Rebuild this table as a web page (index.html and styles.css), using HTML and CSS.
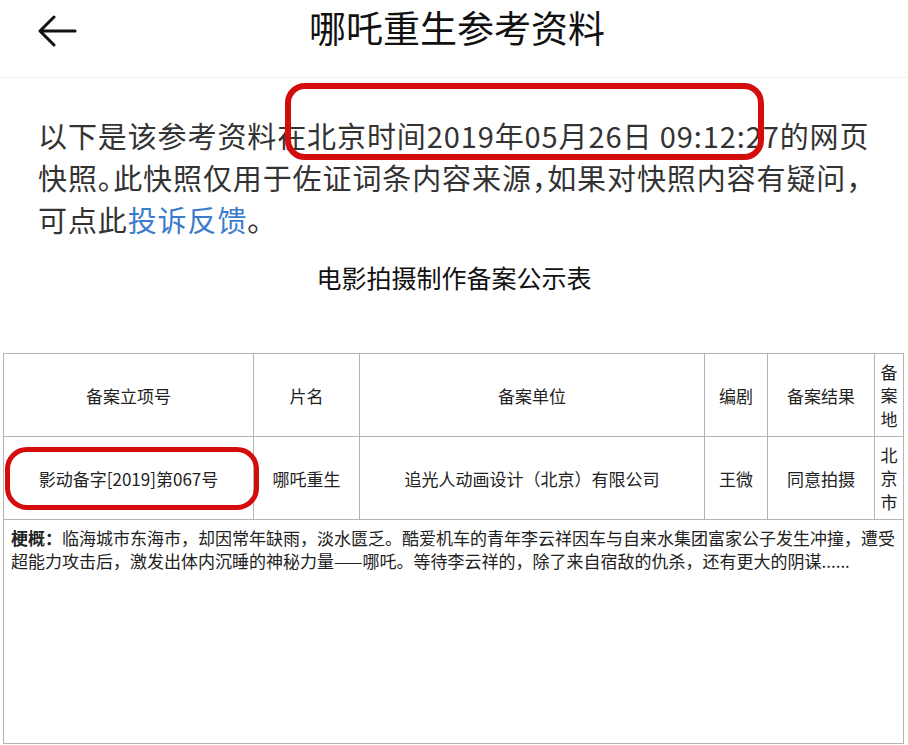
FILE: index.html
```html
<html>
	<head>
		<title>哪吒重生参考资料</title>
		<link rel="stylesheet" href="styles.css">
	</head>
	<body>

		<div class="Header">
			<div class="Back">
				<svg width="40" height="32" viewBox="0 0 40 32">
					<path d="M17 2 L3 16 L17 30 M3 16 H38" fill="none" stroke="#111" stroke-width="3" stroke-linecap="round" stroke-linejoin="round"/>
				</svg>
			</div>
			<div class="Title">哪吒重生参考资料</div>
			<div></div>
		</div>

		<div class="Notice">
			以下是该参考资料在北京时间2019年05月26日 09:12:27的网页<br/>
			快照。此快照仅用于佐证词条内容来源，如果对快照内容有疑问，<br/>
			可点此<a href="#" class="Link">投诉反馈</a>。
		</div>

		<div class="Caption">电影拍摄制作备案公示表</div>

		<table class="Record">
			<colgroup>
				<col style="width: 250px"/>
				<col style="width: 106px"/>
				<col style="width: 345px"/>
				<col style="width: 63px"/>
				<col style="width: 107px"/>
				<col style="width: 29px"/>
			</colgroup>
			<tr class="Row">
				<td>备案立项号</td>
				<td>片名</td>
				<td>备案单位</td>
				<td>编剧</td>
				<td>备案结果</td>
				<td class="Narrow">备案地</td>
			</tr>
			<tr class="Row">
				<td>影动备字[2019]第067号</td>
				<td>哪吒重生</td>
				<td>追光人动画设计（北京）有限公司</td>
				<td>王微</td>
				<td>同意拍摄</td>
				<td class="Narrow">北京市</td>
			</tr>
			<tr class="Summary">
				<td colspan="6"><b>梗概：</b>临海城市东海市，却因常年缺雨，淡水匮乏。酷爱机车的青年李云祥因车与自来水集团富家公子发生冲撞，遭受超能力攻击后，激发出体内沉睡的神秘力量——哪吒。等待李云祥的，除了来自宿敌的仇杀，还有更大的阴谋......</td>
			</tr>
		</table>

		<!-- red annotation marks -->
		<div class="Mark MarkTime"></div>
		<div class="Mark MarkCode"></div>

	</body>
</html>
```

FILE: styles.css
```css
html, body {margin: 0; background-color: white; overflow: hidden;}
body {
	font-family: "Noto Sans CJK SC", "Noto Sans", sans-serif;
	color: #222;
	position: relative;
	height: 745px;
}

.Header {
	display: grid;
	grid-template-columns: 1fr auto 1fr;
	align-items: center;
	padding: 5px 0 28px 0;
	border-bottom: 1px solid #efefef;
}
.Back {
	padding-left: 37px;
	height: 32px;
	margin-top: 8px;
}
.Title {
	font-size: 37px;
	line-height: 44px;
	color: #111;
	padding-left: 6px;
}

.Notice {
	padding: 36px 38px 0 38px;
	font-size: 29px;
	line-height: 42px;
	color: #333;
	white-space: nowrap;
	letter-spacing: 0.9px;
	font-feature-settings: "halt";
}
.Link {
	color: #3b7dcc;
	text-decoration: none;
}

.Caption {
	margin-top: 20px;
	text-align: center;
	font-size: 25px;
	line-height: 34px;
	color: #111;
}

.Record {
	margin: 59px 0 0 3px;
	width: 900px;
	table-layout: fixed;
	border-collapse: collapse;
	font-size: 17px;
	color: #222;
}
.Record td {
	border: 1px solid #b4b4b4;
	text-align: center;
	vertical-align: middle;
	padding: 0 4px;
}
.Row {
	height: 83px;
}
.Record td.Narrow {
	padding: 0 5px;
	line-height: 23.5px;
}
.Summary {
	height: 224px;
}
.Record .Summary td {
	text-align: left;
	vertical-align: top;
	padding: 6px 3px 0 7px;
	line-height: 23px;
}

.Mark {
	position: absolute;
	box-sizing: border-box;
	border: 6px solid #d40c0c;
}
.MarkTime {
	left: 285px;
	top: 83px;
	width: 479px;
	height: 77px;
	border-radius: 20px;
}
.MarkCode {
	left: 5px;
	top: 447px;
	width: 254px;
	height: 63px;
	border-width: 5px;
	border-radius: 22px;
}
```
